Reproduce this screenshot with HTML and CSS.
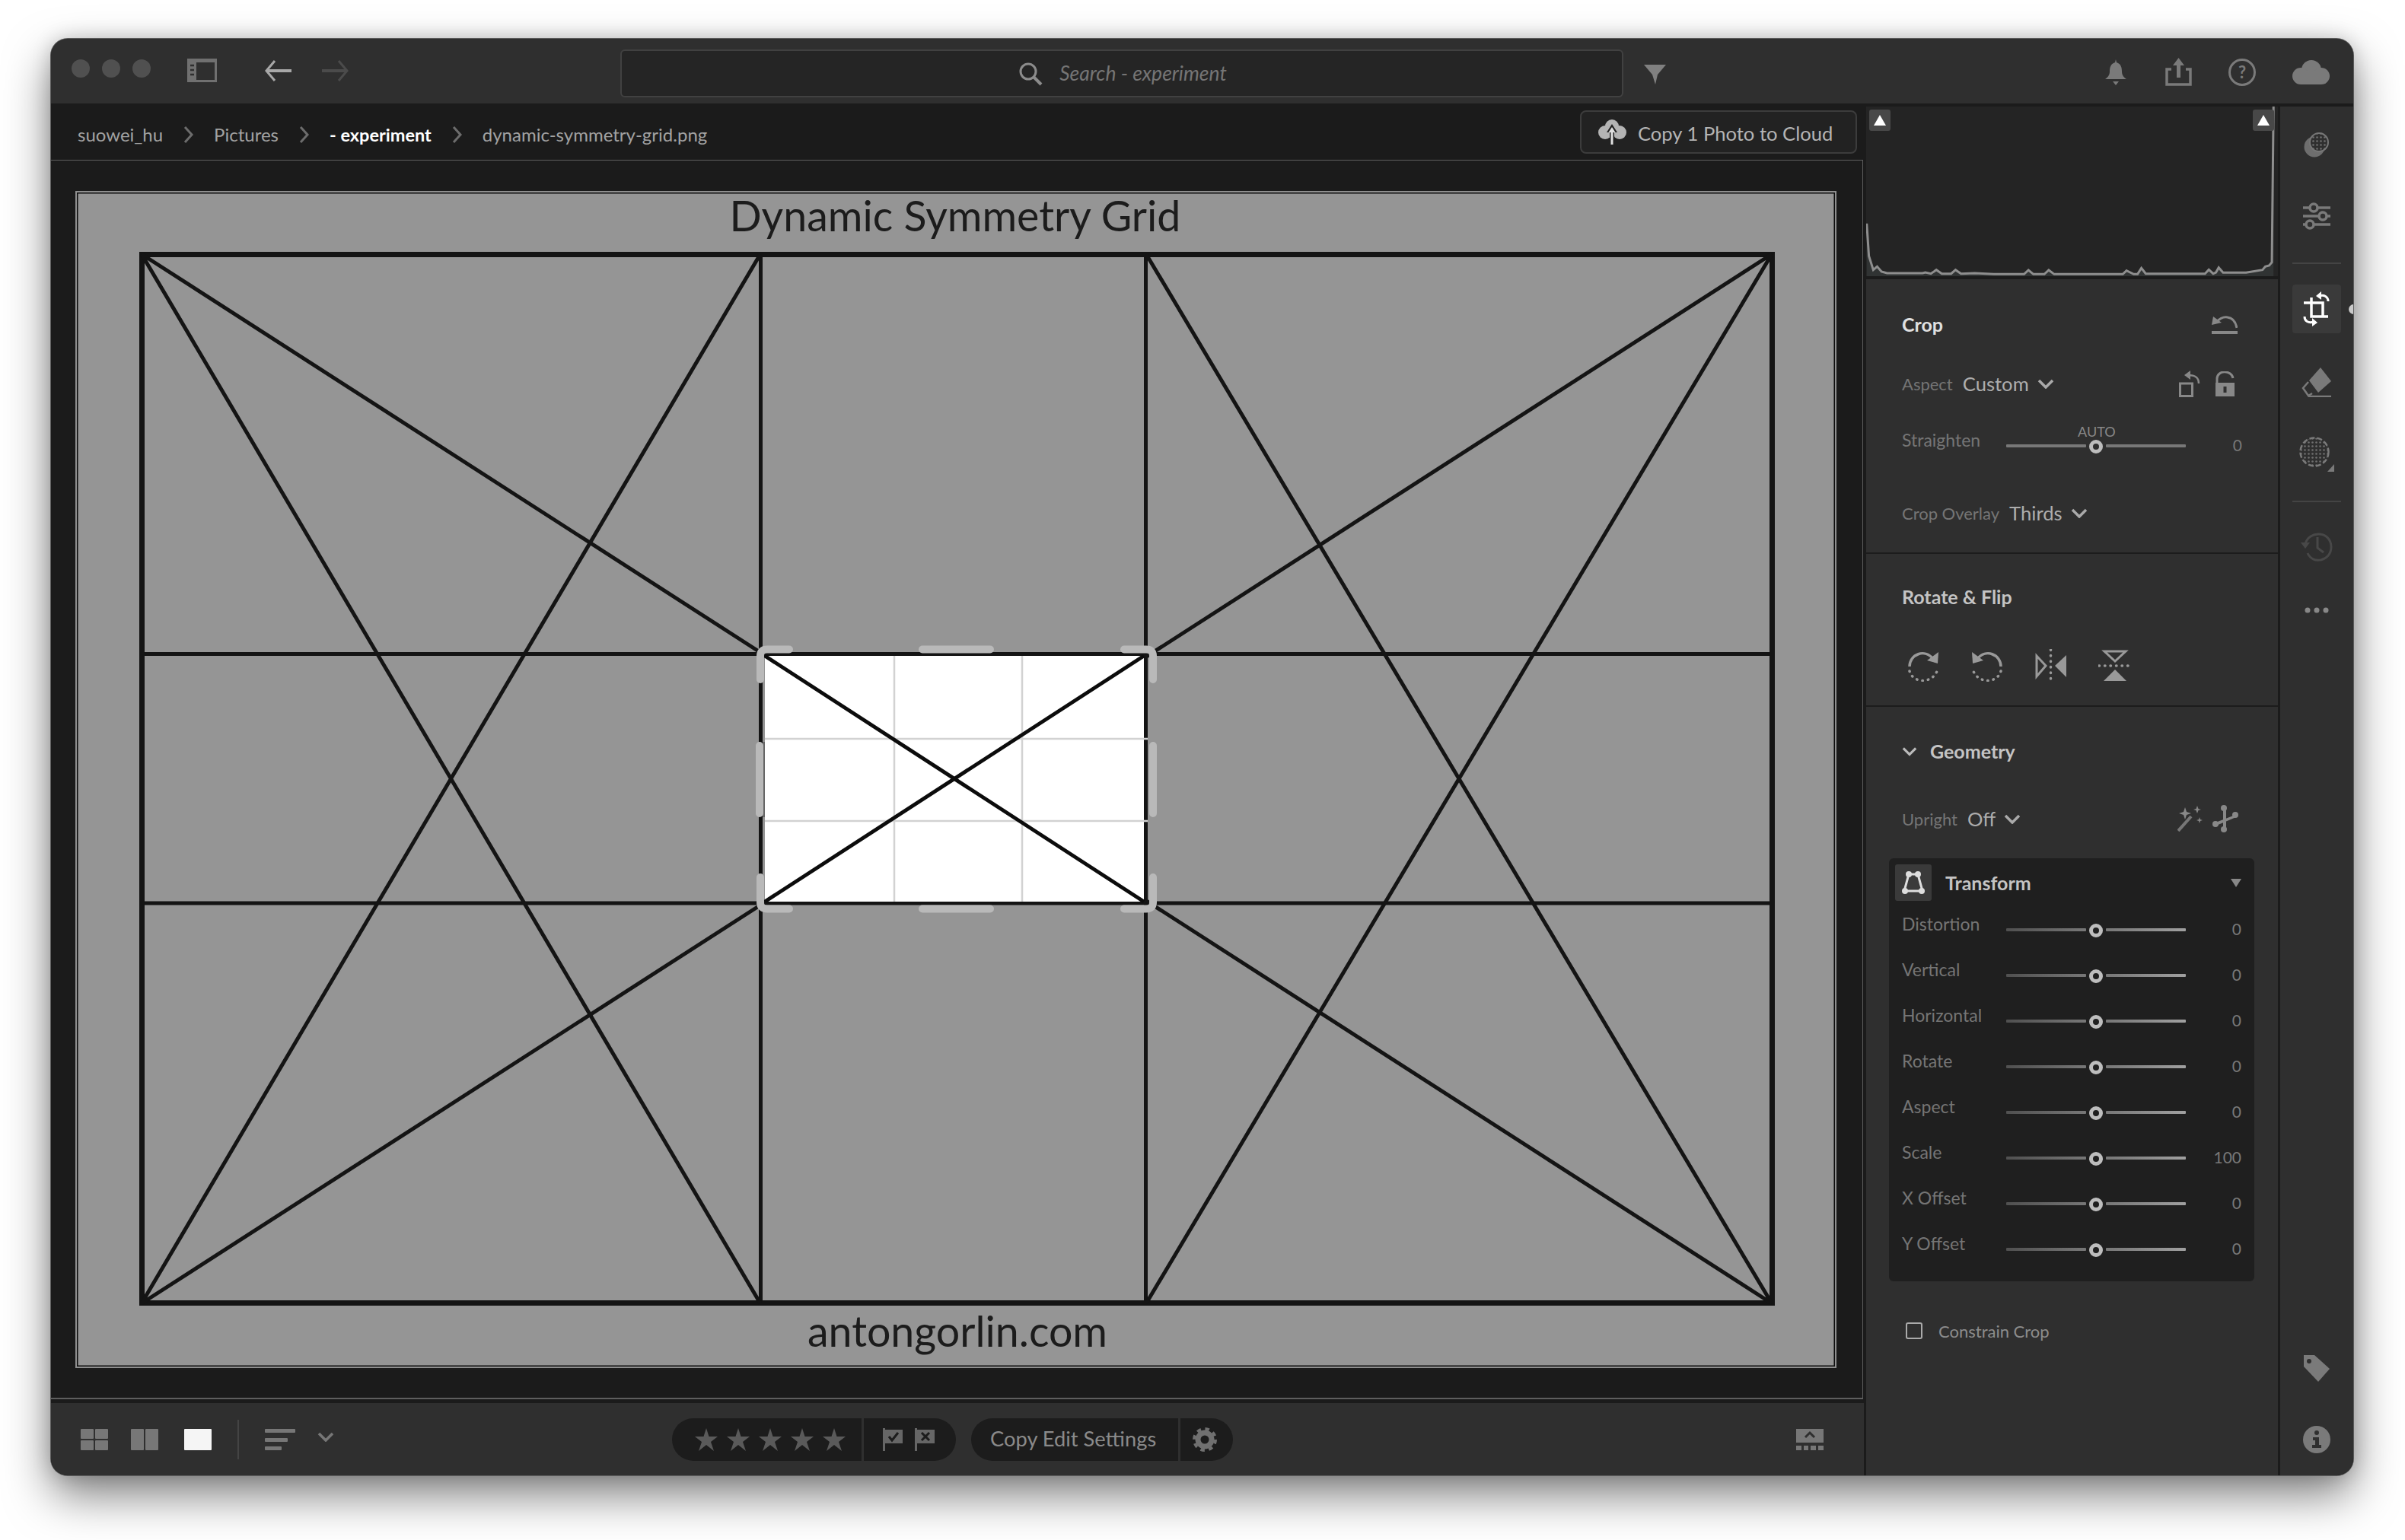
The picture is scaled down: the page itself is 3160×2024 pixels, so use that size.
FILE: index.html
```html
<!DOCTYPE html>
<html lang="en">
<head>
  <meta charset="UTF-8">
  <title>Lightroom - Crop</title>
  <link rel="stylesheet" href="styles.css">
</head>
<body>

<svg class="defs" width="0" height="0">
  <defs>
    <polygon id="star" points="15,0 18.5,11 30,11 21,18 25,30 15,22 5,30 9,18 0,11 11.5,11"/>
    <polyline id="chev" points="2,2 11,11 20,2"/>
    <pattern id="dots" width="5" height="5" patternUnits="userSpaceOnUse">
      <circle cx="2.5" cy="2.5" r="1.3" fill="#6f6f6f"/>
    </pattern>
  </defs>
</svg>

<div class="window">

  <!-- Title bar -->
  <div class="titlebar">
    <div class="lights"><span></span><span></span><span></span></div>
    <svg class="ic-sidebar" width="39" height="31" viewBox="0 0 39 31">
      <rect width="39" height="31" fill="#707070"/>
      <rect x="12" y="5" width="24" height="23" fill="#2f2f2f"/>
      <path d="M4 9h5M4 15h5M4 21h5" stroke="#2f2f2f" stroke-width="2.5"/>
    </svg>
    <svg class="ic-back" width="35" height="28" viewBox="0 0 35 28" fill="none" stroke="#a8a8a8">
      <path d="M13 1 L2 14 L13 27" stroke-width="3"/><path d="M3 14H35" stroke-width="4"/>
    </svg>
    <svg class="ic-forward" width="35" height="28" viewBox="0 0 35 28" fill="none" stroke="#4b4b4b">
      <path d="M22 1 L33 14 L22 27" stroke-width="3"/><path d="M0 14H32" stroke-width="4"/>
    </svg>
    <div class="search">
      <svg width="32" height="32" viewBox="0 0 32 32" fill="none" stroke="#8c8c8c">
        <circle cx="13" cy="13" r="10" stroke-width="3"/><path d="M20 20 L30 30" stroke-width="4"/>
      </svg>
      <span>Search - experiment</span>
    </div>
    <svg class="ic-filter" width="29" height="26" viewBox="0 0 29 26" fill="#808080">
      <polygon points="0,0 29,0 18,13 15,26 11,13"/>
    </svg>
    <div class="title-right">
      <svg class="ic-bell" width="28" height="34" viewBox="0 0 28 34" fill="#7a7a7a">
        <path d="M14 0 L15 4 C21 6 22 11 22 16 C22 21 25 24 28 26 H0 C3 24 6 21 6 16 C6 11 7 6 13 4Z"/>
        <path d="M10 29 H18 L14 34Z"/>
      </svg>
      <svg width="35" height="37" viewBox="0 0 35 37">
        <path d="M8 15 H2 V35 H33 V15 H27" fill="none" stroke="#7a7a7a" stroke-width="3.5"/>
        <path d="M17.5 0 L25 10 H20 V26 H15 V10 H10Z" fill="#7a7a7a"/>
      </svg>
      <svg width="36" height="36" viewBox="0 0 36 36">
        <circle cx="18" cy="18" r="16.5" fill="none" stroke="#7a7a7a" stroke-width="3"/>
        <text x="18" y="26" class="help-q">?</text>
      </svg>
      <svg width="49" height="32" viewBox="0 0 49 32" fill="#7a7a7a">
        <circle cx="25" cy="13" r="13"/><circle cx="11" cy="21" r="11"/><circle cx="38" cy="21" r="11"/>
        <rect x="11" y="16" width="27" height="16"/>
      </svg>
    </div>
  </div>

  <div class="body">

    <!-- Main column -->
    <div class="main">
      <div class="breadcrumb">
        <a>suowei_hu</a>
        <svg class="sep" width="15" height="22" viewBox="0 0 15 22"><path d="M3 1 L12 11 L3 21"/></svg>
        <a>Pictures</a>
        <svg class="sep" width="15" height="22" viewBox="0 0 15 22"><path d="M3 1 L12 11 L3 21"/></svg>
        <a class="current">- experiment</a>
        <svg class="sep" width="15" height="22" viewBox="0 0 15 22"><path d="M3 1 L12 11 L3 21"/></svg>
        <a>dynamic-symmetry-grid.png</a>
        <button class="copy-btn">
          <svg width="37" height="33" viewBox="0 0 37 33">
            <g fill="#b4b4b4">
              <circle cx="18" cy="9" r="9"/><circle cx="9" cy="17" r="9"/><circle cx="28" cy="17" r="9"/>
            </g>
            <path d="M18 6 L25 17 H21 V26 H15 V17 H11Z" fill="#222"/>
            <rect x="16.5" y="16" width="3" height="17" fill="#e0e0e0"/>
            <path d="M18 10 L22.5 17 H13.5Z" fill="#e0e0e0"/>
          </svg>
          <span>Copy 1 Photo to Cloud</span>
        </button>
      </div>

      <div class="canvas">
        <svg class="picture" width="2314" height="1547" viewBox="99 251 2314 1547">
          <rect x="99" y="251" width="2314" height="1547" fill="#8f8f8f"/>
          <rect x="101" y="253" width="2310" height="1543" fill="#0b0b0b"/>
          <rect x="102.5" y="254.5" width="2307" height="1540" fill="#959595"/>

          <text x="1255" y="304" class="pic-text">Dynamic Symmetry Grid</text>
          <text x="1258" y="1770" class="pic-text">antongorlin.com</text>

          <g stroke="#141414" fill="none">
            <rect x="186.5" y="334.5" width="2142" height="1378" stroke-width="7"/>
            <path d="M999.5 334V1713M1505.5 334V1713M186 859.5H2328M186 1187H2328" stroke-width="5"/>
            <path d="M186 334 L2328 1713M2328 334 L186 1713M186 334 L999 1713M186 1713 L999 334M2328 334 L1506 1713M2328 1713 L1506 334" stroke-width="5"/>
          </g>

          <!-- selected crop area -->
          <rect x="1005" y="862" width="498" height="323" fill="#fff"/>
          <path d="M1175 862V1185M1343 862V1185M1005 971H1508M1005 1079H1508" stroke="#d2d2d2" stroke-width="2.5"/>
          <path d="M1005 862 L1503 1185M1503 862 L1005 1185" stroke="#0c0c0c" stroke-width="5"/>
          <path d="M1003.5 975V1074" stroke="#666" stroke-width="3"/>
          <g fill="none" stroke="#b9b9b9" stroke-width="10" stroke-linecap="round">
            <path d="M999 893V862Q999 853.5 1008 853.5H1037"/>
            <path d="M1515 893V862Q1515 853.5 1506 853.5H1477"/>
            <path d="M999 1153V1186Q999 1194.5 1008 1194.5H1037"/>
            <path d="M1515 1153V1186Q1515 1194.5 1506 1194.5H1477"/>
            <path d="M1212 853.5H1301M1212 1194.5H1301M998 980V1069M1515 980V1069"/>
          </g>
        </svg>
      </div>

      <div class="toolbar">
        <svg class="ic-grid" width="36" height="28" viewBox="0 0 36 28" fill="#777">
          <rect width="17" height="13" rx="1"/><rect x="19" width="17" height="13" rx="1"/>
          <rect y="15" width="17" height="13" rx="1"/><rect x="19" y="15" width="17" height="13" rx="1"/>
        </svg>
        <svg class="ic-two" width="36" height="28" viewBox="0 0 36 28" fill="#777">
          <rect width="17" height="28" rx="1"/><rect x="19" width="17" height="28" rx="1"/>
        </svg>
        <div class="ic-one"></div>
        <div class="tool-div"></div>
        <svg class="ic-sort" width="40" height="28" viewBox="0 0 40 28" fill="#777">
          <rect width="40" height="5" rx="1"/><rect y="12" width="30" height="5" rx="1"/><rect y="23" width="22" height="5" rx="1"/>
        </svg>
        <svg class="chev ic-sort-chev" width="22" height="13" viewBox="0 0 22 13"><use href="#chev"/></svg>

        <div class="pill stars-pill">
          <div class="pill-part stars">
            <svg width="30" height="30" fill="#5a5a5a"><use href="#star"/></svg>
            <svg width="30" height="30" fill="#5a5a5a"><use href="#star"/></svg>
            <svg width="30" height="30" fill="#5a5a5a"><use href="#star"/></svg>
            <svg width="30" height="30" fill="#5a5a5a"><use href="#star"/></svg>
            <svg width="30" height="30" fill="#5a5a5a"><use href="#star"/></svg>
          </div>
          <div class="pill-part flags">
            <svg width="26" height="30" viewBox="0 0 26 30">
              <path d="M0 0H3V2H26V20H3V30H0Z" fill="#666"/>
              <path d="M8 11 L12 16 L20 6" fill="none" stroke="#1c1c1c" stroke-width="3"/>
            </svg>
            <svg width="26" height="30" viewBox="0 0 26 30">
              <path d="M0 0H3V2H26V20H3V30H0Z" fill="#666"/>
              <path d="M9 6 L19 16M19 6 L9 16" fill="none" stroke="#1c1c1c" stroke-width="3"/>
            </svg>
          </div>
        </div>

        <div class="pill copy-pill">
          <div class="pill-part copy-edit">Copy Edit Settings</div>
          <div class="pill-part gear">
            <svg width="32" height="32" viewBox="0 0 32 32" fill="none" stroke="#707070">
              <circle cx="16" cy="16" r="9" stroke-width="7"/>
              <circle cx="16" cy="16" r="14" stroke-width="4" stroke-dasharray="5.5 5.5"/>
            </svg>
          </div>
        </div>

        <svg class="ic-filmstrip" width="36" height="28" viewBox="0 0 36 28">
          <rect width="36" height="18" fill="#777"/>
          <path d="M12 11 L18 5 L24 11" fill="none" stroke="#2f2f2f" stroke-width="3"/>
          <path d="M0 25H7M10 25H16M19 25H26M29 25H36" stroke="#777" stroke-width="6"/>
        </svg>
      </div>
    </div>

    <!-- Right column -->
    <div class="side">
      <div class="histogram">
        <svg class="curve" viewBox="627 330 751 670" preserveAspectRatio="none">
          <path class="curve-fill" d="M628 792 632 920 640 975 647 962 655 982 665 988 730 988 735 985 745 990 755 975 765 990 782 990 790 975 800 990 825 988 860 992 915 992 923 976 932 992 952 992 960 976 970 992 1095 992 1102 978 1115 992 1122 992 1129 968 1137 990 1245 990 1252 974 1260 990 1265 985 1270 966 1278 986 1320 986 1350 975 1355 962 1362 958 1367 945 1370 330 V1000 H628Z"/>
          <path class="curve-line" d="M628 792 632 920 640 975 647 962 655 982 665 988 730 988 735 985 745 990 755 975 765 990 782 990 790 975 800 990 825 988 860 992 915 992 923 976 932 992 952 992 960 976 970 992 1095 992 1102 978 1115 992 1122 992 1129 968 1137 990 1245 990 1252 974 1260 990 1265 985 1270 966 1278 986 1320 986 1350 975 1355 962 1362 958 1367 945 1370 330"/>
        </svg>
        <div class="clip-btn left"></div>
        <div class="clip-btn right"></div>
      </div>

      <div class="panel">
        <div class="section crop-section">
          <div class="row head">
            <span class="title">Crop</span>
            <svg class="push ic-reset" width="34" height="25" viewBox="0 0 34 25" fill="none" stroke="#888">
              <path d="M6 10 C12 0 30 -1 33 17" stroke-width="3"/>
              <polygon points="0,13 2,2 13,10" fill="#888" stroke="none"/>
              <path d="M0 23H34" stroke-width="4"/>
            </svg>
          </div>
          <div class="row aspect">
            <span class="lbl">Aspect</span><span class="val">Custom</span>
            <svg class="chev" width="22" height="13" viewBox="0 0 22 13"><use href="#chev"/></svg>
            <svg class="push" width="28" height="35" viewBox="0 0 28 35">
              <rect x="1.5" y="17" width="16" height="16.5" fill="none" stroke="#888" stroke-width="3"/>
              <path d="M12 6 C20 6 26 8 26 17" fill="none" stroke="#888" stroke-width="2.5"/>
              <path d="M15 0 V12 L7 6Z" fill="#888"/>
            </svg>
            <svg class="ic-lock" width="27" height="33" viewBox="0 0 27 33">
              <path d="M3 15 V10 C3 -2 22 -2 24 9" fill="none" stroke="#888" stroke-width="3"/>
              <rect x="1" y="15" width="25" height="18" fill="#888"/>
              <rect x="11.5" y="20" width="4" height="8" fill="#2f2f2f"/>
            </svg>
          </div>
          <div class="row slider-row straighten">
            <span class="lbl slider-lbl">Straighten</span>
            <div class="slider plain">
              <span class="auto">AUTO</span>
              <i class="seg"></i><b class="knob"></b><i class="seg"></i>
            </div>
            <span class="num">0</span>
          </div>
          <div class="row overlay">
            <span class="lbl">Crop Overlay</span><span class="val">Thirds</span>
            <svg class="chev" width="22" height="13" viewBox="0 0 22 13"><use href="#chev"/></svg>
          </div>
        </div>

        <div class="section rotate-section">
          <div class="row head"><span class="title dim">Rotate &amp; Flip</span></div>
          <div class="row rotate-icons">
            <svg width="44" height="42" viewBox="0 0 44 42" fill="none" stroke="#999">
              <path d="M4 22 C4 6 24 -2 35 12" stroke-width="3.5"/>
              <path d="M42 3 L41 18 L27 14Z" fill="#999" stroke="none"/>
              <path d="M4 28 C8 44 34 46 41 26" stroke-width="3.5" stroke-dasharray="0.5 7" stroke-linecap="round"/>
            </svg>
            <svg width="44" height="42" viewBox="0 0 44 42" fill="none" stroke="#999">
              <path d="M40 22 C40 6 20 -2 9 12" stroke-width="3.5"/>
              <path d="M2 3 L3 18 L17 14Z" fill="#999" stroke="none"/>
              <path d="M40 28 C36 44 10 46 3 26" stroke-width="3.5" stroke-dasharray="0.5 7" stroke-linecap="round"/>
            </svg>
            <svg width="44" height="44" viewBox="0 0 44 44" fill="none" stroke="#999">
              <path d="M3 9 V36 L15 22Z" stroke-width="3"/>
              <path d="M42 8 V37 L27 22Z" fill="#999" stroke="none"/>
              <path d="M21.5 1 V44" stroke-width="3.5" stroke-dasharray="0.5 7" stroke-linecap="round"/>
            </svg>
            <svg width="44" height="42" viewBox="0 0 44 42" fill="none" stroke="#999">
              <path d="M8 2 H36 L22 15Z" stroke-width="3"/>
              <path d="M7 41 H37 L22 26Z" fill="#999" stroke="none"/>
              <path d="M1 21 H44" stroke-width="3.5" stroke-dasharray="0.5 7" stroke-linecap="round"/>
            </svg>
          </div>
        </div>

        <div class="section geometry">
          <div class="row head">
            <svg class="chev light" width="20" height="13" viewBox="0 0 22 13"><use href="#chev"/></svg>
            <span class="title dim geo-title">Geometry</span>
          </div>
          <div class="row upright">
            <span class="lbl">Upright</span><span class="val">Off</span>
            <svg class="chev" width="22" height="13" viewBox="0 0 22 13"><use href="#chev"/></svg>
            <svg class="push" width="33" height="34" viewBox="0 0 33 34">
              <path d="M1 33 L18 14" stroke="#777" stroke-width="4"/>
              <path d="M10 2 L12 8 L18 10 L12 12 L10 18 L8 12 L2 10 L8 8Z M26 0 L27.5 4 L31 5 L27.5 6 L26 10 L24.5 6 L21 5 L24.5 4Z M29 15 L30 18 L33 19 L30 20 L29 23 L28 20 L25 19 L28 18Z" fill="#888"/>
            </svg>
            <svg class="ic-guide" width="34" height="36" viewBox="0 0 34 36" fill="#888">
              <path d="M14 4H18V32H14Z"/><path d="M4 23 L30 13 L31 16 L5 27Z"/>
              <circle cx="15" cy="4" r="4"/><circle cx="15" cy="32" r="4"/><circle cx="4" cy="25" r="4"/><circle cx="30" cy="13" r="4"/>
            </svg>
          </div>

          <div class="card">
            <div class="card-head">
              <div class="transform-ic">
                <svg width="30" height="30" viewBox="0 0 30 30" fill="none" stroke="#ddd">
                  <path d="M9 4 H21 L27 26 H3Z" stroke-width="3"/>
                  <g fill="#ddd" stroke="none"><circle cx="9" cy="4" r="4"/><circle cx="21" cy="4" r="4"/><circle cx="4" cy="26" r="4"/><circle cx="26" cy="26" r="4"/></g>
                </svg>
              </div>
              <span class="title dim transform-title">Transform</span>
              <div class="tri-down"></div>
            </div>
            <div class="row slider-row"><span class="lbl slider-lbl">Distortion</span><div class="slider"><i class="seg"></i><b class="knob"></b><i class="seg"></i></div><span class="num">0</span></div>
            <div class="row slider-row"><span class="lbl slider-lbl">Vertical</span><div class="slider"><i class="seg"></i><b class="knob"></b><i class="seg"></i></div><span class="num">0</span></div>
            <div class="row slider-row"><span class="lbl slider-lbl">Horizontal</span><div class="slider"><i class="seg"></i><b class="knob"></b><i class="seg"></i></div><span class="num">0</span></div>
            <div class="row slider-row"><span class="lbl slider-lbl">Rotate</span><div class="slider"><i class="seg"></i><b class="knob"></b><i class="seg"></i></div><span class="num">0</span></div>
            <div class="row slider-row"><span class="lbl slider-lbl">Aspect</span><div class="slider"><i class="seg"></i><b class="knob"></b><i class="seg"></i></div><span class="num">0</span></div>
            <div class="row slider-row"><span class="lbl slider-lbl">Scale</span><div class="slider"><i class="seg"></i><b class="knob"></b><i class="seg"></i></div><span class="num">100</span></div>
            <div class="row slider-row"><span class="lbl slider-lbl">X Offset</span><div class="slider"><i class="seg"></i><b class="knob"></b><i class="seg"></i></div><span class="num">0</span></div>
            <div class="row slider-row"><span class="lbl slider-lbl">Y Offset</span><div class="slider"><i class="seg"></i><b class="knob"></b><i class="seg"></i></div><span class="num">0</span></div>
          </div>

          <div class="row constrain">
            <span class="checkbox"></span><span class="constrain-lbl">Constrain Crop</span>
          </div>
        </div>
      </div>
    </div>

    <!-- Icon rail -->
    <div class="rail">
      <div class="rail-item">
        <svg width="34" height="34" viewBox="0 0 34 34">
          <circle cx="14" cy="20" r="13.5" fill="#6e6e6e"/>
          <circle cx="20" cy="14" r="12" fill="#2f2f2f"/>
          <circle cx="20" cy="14" r="12" fill="url(#dots)" stroke="#777" stroke-width="2"/>
        </svg>
      </div>
      <div class="rail-item">
        <svg width="36" height="36" viewBox="0 0 36 36" fill="none" stroke="#7a7a7a" stroke-width="3.5">
          <path d="M0 7H9M19 7H36M0 18H22M30 18H36M0 29H4M14 29H36"/>
          <circle cx="14" cy="7" r="5"/><circle cx="26" cy="18" r="5"/><circle cx="9" cy="29" r="5"/>
        </svg>
      </div>
      <div class="rail-div"></div>
      <div class="rail-item active">
        <svg width="36" height="46" viewBox="0 0 36 46" fill="none" stroke="#fff">
          <path d="M1 15 H26 V34" stroke-width="3.5"/><path d="M11 8 V33 H33" stroke-width="3.5"/>
          <path d="M21 6 C28 4 33 7 33 13" stroke-width="3"/><path d="M24 0 V11 L17 6Z" fill="#fff" stroke="none"/>
          <path d="M14 40 C7 42 2 39 2 33" stroke-width="3"/><path d="M12 35 V46 L19 41Z" fill="#fff" stroke="none"/>
        </svg>
      </div>
      <div class="rail-item eraser">
        <svg width="40" height="39" viewBox="0 0 40 39">
          <path d="M25 0 L39 18 L22 33 L10 17Z" fill="#7a7a7a"/>
          <path d="M9 19 L2 27 L9 37 L14 34" fill="none" stroke="#7a7a7a" stroke-width="2.5"/>
          <path d="M9 38H39" stroke="#7a7a7a" stroke-width="2.5"/>
        </svg>
      </div>
      <div class="rail-item mask">
        <svg width="46" height="46" viewBox="0 0 46 46">
          <circle cx="20" cy="20" r="18.5" fill="url(#dots)" stroke="#7a7a7a" stroke-width="2.5" stroke-dasharray="7 3"/>
          <path d="M46 36 V46 H37Z" fill="#7a7a7a"/>
        </svg>
      </div>
      <div class="rail-div"></div>
      <div class="rail-item history">
        <svg width="42" height="40" viewBox="0 0 42 40" fill="none" stroke="#484848" stroke-width="3">
          <path d="M6 16 C10 -2 40 -2 40 20 C40 38 16 44 9 28"/>
          <path d="M22 7 V21 L30 27"/>
          <path d="M0 14 H12 L6 22Z" fill="#484848" stroke="none"/>
        </svg>
      </div>
      <div class="rail-item">
        <svg width="32" height="8" viewBox="0 0 32 8" fill="#888">
          <circle cx="4" cy="4" r="3.5"/><circle cx="16" cy="4" r="3.5"/><circle cx="28" cy="4" r="3.5"/>
        </svg>
      </div>
      <div class="rail-item rail-bottom">
        <svg width="36" height="35" viewBox="0 0 36 35">
          <path d="M1 0 H15 L35 18 L20 35 L1 15Z" fill="#7a7a7a"/>
          <circle cx="8" cy="8" r="3" fill="#2f2f2f"/>
        </svg>
      </div>
      <div class="rail-item">
        <svg width="36" height="36" viewBox="0 0 36 36">
          <circle cx="18" cy="18" r="18" fill="#7a7a7a"/>
          <circle cx="18" cy="9" r="3" fill="#2f2f2f"/>
          <path d="M13 15 H21 V25 H24 V29 H12 V25 H16 V19 H13Z" fill="#2f2f2f"/>
        </svg>
      </div>
      <div class="rail-dot"></div>
    </div>

  </div>
</div>

</body>
</html>
```

FILE: styles.css
```css
* { box-sizing: border-box; }

html { height: 100%; background: #fff; }

body {
  margin: 0;
  height: 100%;
  padding: 51px 67px 0;
  font-family: 'Lato', 'Open Sans', sans-serif;
  overflow: hidden;
}

.defs { position: absolute; }

svg { display: block; flex-shrink: 0; }

.window {
  width: 3025px;
  height: 1888px;
  display: flex;
  flex-direction: column;
  border-radius: 22px;
  overflow: hidden;
  background: #2f2f2f;
  box-shadow: 0 0 0 1px #5c5c5c, 0 26px 60px rgba(0, 0, 0, 0.5), 0 0 26px rgba(0, 0, 0, 0.18);
}

/* title bar */
.titlebar {
  height: 85px;
  flex-shrink: 0;
  display: flex;
  align-items: center;
  padding: 0 31px 0 27px;
  background: #2f2f2f;
}

.lights { display: flex; gap: 16px; margin-bottom: 7px; }
.lights span { width: 24px; height: 24px; border-radius: 50%; background: #505050; }

.ic-sidebar { margin-left: 48px; margin-bottom: 3px; }
.ic-back { margin-left: 63px; margin-bottom: 2px; }
.ic-forward { margin-left: 40px; margin-bottom: 2px; }

.search {
  width: 1318px;
  height: 63px;
  margin-left: 357px;
  margin-top: 6px;
  display: flex;
  align-items: center;
  justify-content: center;
  gap: 22px;
  padding-left: 2px;
  background: #252525;
  border: 2px solid #414141;
  border-radius: 6px;
  color: #757575;
  font-size: 26.5px;
  font-style: italic;
}

.search span { margin-bottom: 2px; }

.ic-filter { margin-left: 27px; margin-top: 8px; }

.title-right { margin-left: auto; display: flex; align-items: center; gap: 48px; margin-top: 2px; }
.ic-bell { margin-right: 3px; }

.help-q { font: 700 22px 'Lato', sans-serif; fill: #7a7a7a; text-anchor: middle; }

.body { flex: 1; min-height: 0; display: flex; background: #1b1b1b; }

/* main column */
.main { width: 2385px; flex-shrink: 0; display: flex; flex-direction: column; }

.breadcrumb {
  height: 74px;
  flex-shrink: 0;
  display: flex;
  align-items: center;
  padding: 7px 12px 0 35px;
  gap: 26px;
  color: #a2a2a2;
  font-size: 24px;
}

.breadcrumb .current { color: #fff; font-weight: 700; font-size: 23.5px; }

.sep { fill: none; stroke: #6c6c6c; stroke-width: 3; }

.copy-btn {
  margin-left: auto;
  margin-top: -7px;
  width: 364px;
  height: 57px;
  display: flex;
  align-items: center;
  gap: 15px;
  padding: 0 0 0 22px;
  background: #222;
  border: 2px solid #3c3c3c;
  border-radius: 8px;
  color: #b4b4b4;
  font: 25.6px 'Lato', sans-serif;
}

.copy-btn span { margin-top: 3px; }

.canvas {
  height: 1629px;
  flex-shrink: 0;
  margin-right: 4px;
  padding: 40px 0 0 32px;
  border-top: 1px solid #5e5e5e;
  border-right: 1px solid #5e5e5e;
  border-bottom: 2px solid #5e5e5e;
}

.pic-text { font: 400 55.5px 'Lato', sans-serif; fill: #1c1c1c; text-anchor: middle; }

.toolbar {
  flex: 1;
  margin-top: 5px;
  margin-right: 3px;
  display: flex;
  align-items: center;
  padding: 0 53px 0 39px;
  background: #2f2f2f;
}

.ic-two { margin-left: 30px; }
.ic-one { width: 36px; height: 28px; margin-left: 34px; border-radius: 1px; background: #f5f5f5; }
.tool-div { width: 2px; height: 52px; margin-left: 34px; background: #444; }
.ic-sort { margin-left: 34px; }
.ic-sort-chev { margin-left: 29px; margin-top: -6px; }

.chev { fill: none; stroke: #aaa; stroke-width: 3.5; }
.chev.light { stroke: #bbb; }
.ic-sort-chev { stroke: #777; }

.pill { height: 56px; display: flex; gap: 3px; border-radius: 28px; overflow: hidden; margin-top: 0; }
.pill-part { height: 100%; display: flex; align-items: center; background: #1c1c1c; }

.stars-pill { margin-left: 444px; width: 373px; }
.stars { width: 249px; padding-left: 30px; gap: 12px; }
.flags { flex: 1; padding-left: 25px; gap: 16px; }

.copy-pill { margin-left: 20px; width: 344px; }
.copy-edit { width: 272px; padding: 0 0 2px 25px; color: #8a8a8a; font-size: 27.3px; white-space: nowrap; }
.gear { flex: 1; padding-left: 16px; }

.ic-filmstrip { margin-left: auto; }

/* right column */
.side { width: 541px; flex-shrink: 0; margin-top: 4px; display: flex; flex-direction: column; }

.histogram { height: 223px; flex-shrink: 0; position: relative; background: #242424; }

.curve { width: 100%; height: 100%; }
.curve-fill { fill: #303333; stroke: none; }
.curve-line { fill: none; stroke: #8e8e8e; stroke-width: 3; vector-effect: non-scaling-stroke; }

.clip-btn { position: absolute; top: 4px; width: 28px; height: 28px; border-radius: 3px; background: #484848; }
.clip-btn.left { left: 4px; }
.clip-btn.right { right: 5px; }
.clip-btn::after {
  content: '';
  position: absolute;
  left: 6px;
  top: 7px;
  border-left: 8px solid transparent;
  border-right: 8px solid transparent;
  border-bottom: 14px solid #fff;
}

.panel { flex: 1; margin-top: 4px; background: #2f2f2f; }

.section { border-bottom: 2px solid #1c1c1c; padding: 0 47px 0 47px; }
.section.geometry { border-bottom: 0; }

.crop-section { height: 361px; padding-top: 34px; }
.rotate-section { height: 201px; padding-top: 31px; }
.geometry { padding-top: 33px; }

.row { height: 50px; display: flex; align-items: center; }
.push { margin-left: auto; }
.ic-reset { margin-right: 6px; }

.title { color: #e0e0e0; font-size: 25px; font-weight: 700; }
.title.dim { color: #c4c4c4; }
.geo-title { margin-left: 17px; }

.lbl { color: #757575; font-size: 22px; }
.val { margin-left: 13px; color: #adadad; font-size: 25.6px; }
.row .chev { margin-left: 11px; }
.row .chev.light { margin-left: 0; }

.aspect { margin-top: 28px; }
.ic-lock { margin-left: 19px; margin-right: 9px; }
.straighten { margin-top: 32px; }
.overlay { margin-top: 38px; }

.rotate-icons { margin-top: 41px; gap: 40px; padding-left: 6px; }

.upright { margin-top: 39px; }
.ic-guide { margin-left: 13px; margin-right: 5px; }

.slider-row { height: 60px; }
.straighten.slider-row { height: 50px; }
.slider-lbl { width: 137px; padding-bottom: 16px; flex-shrink: 0; font-size: 23px; }

.slider { width: 236px; position: relative; display: flex; align-items: center; flex-shrink: 0; }
.seg { flex: 1; height: 4px; border-radius: 1px; background: linear-gradient(to right, #505050, #777); }
.seg:last-child { background: linear-gradient(to right, #777, #a0a0a0); }
.slider.plain .seg { background: #787878; }
.knob {
  width: 18px;
  height: 18px;
  margin: 2px 4px 0;
  border: 5px solid #bdbdbd;
  border-radius: 50%;
  flex-shrink: 0;
}

.auto {
  position: absolute;
  left: 94px;
  top: -20px;
  color: #888;
  font-size: 18px;
}

.num { flex: 1; padding-bottom: 3px; text-align: right; color: #777; font-size: 21px; }

/* transform card */
.card {
  width: 480px;
  height: 556px;
  margin: 27px 0 0 -17px;
  padding: 8px 17px 0 8px;
  border-radius: 6px;
  background: #1f1f1f;
}

.card .row { margin-left: 9px; }

.card-head { height: 48px; display: flex; align-items: center; margin-bottom: 8px; }
.transform-ic {
  width: 48px;
  height: 48px;
  display: flex;
  align-items: center;
  justify-content: center;
  border-radius: 3px;
  background: #3a3a3a;
}
.transform-title { margin-left: 18px; }
.tri-down {
  margin-left: auto;
  border-left: 7px solid transparent;
  border-right: 7px solid transparent;
  border-top: 11px solid #888;
}

.constrain { margin-top: 40px; padding-left: 5px; }
.checkbox { width: 22px; height: 22px; border: 2px solid #aaa; border-radius: 3px; }
.constrain-lbl { margin-left: 21px; color: #8c8c8c; font-size: 22px; }

/* icon rail */
.rail {
  width: 96px;
  flex-shrink: 0;
  margin-top: 4px;
  margin-left: 3px;
  position: relative;
  display: flex;
  flex-direction: column;
  align-items: center;
  gap: 30px;
  padding: 18px 0 15px;
  background: #2f2f2f;
}

.rail-item {
  width: 64px;
  height: 64px;
  display: flex;
  align-items: center;
  justify-content: center;
  border-radius: 4px;
}

.rail-item.active { background: #3a3a3a; margin-bottom: 2px; }
.rail-item.eraser { margin-bottom: 1px; }
.rail-item.history { margin-bottom: -11px; }
.rail-bottom { margin-top: auto; }

.rail-div { width: 64px; height: 2px; margin: -1px 0 -3px; background: #444; }

.rail-dot {
  position: absolute;
  top: 260px;
  right: -7px;
  width: 13px;
  height: 13px;
  border-radius: 50%;
  background: #c8c8c8;
}
```
